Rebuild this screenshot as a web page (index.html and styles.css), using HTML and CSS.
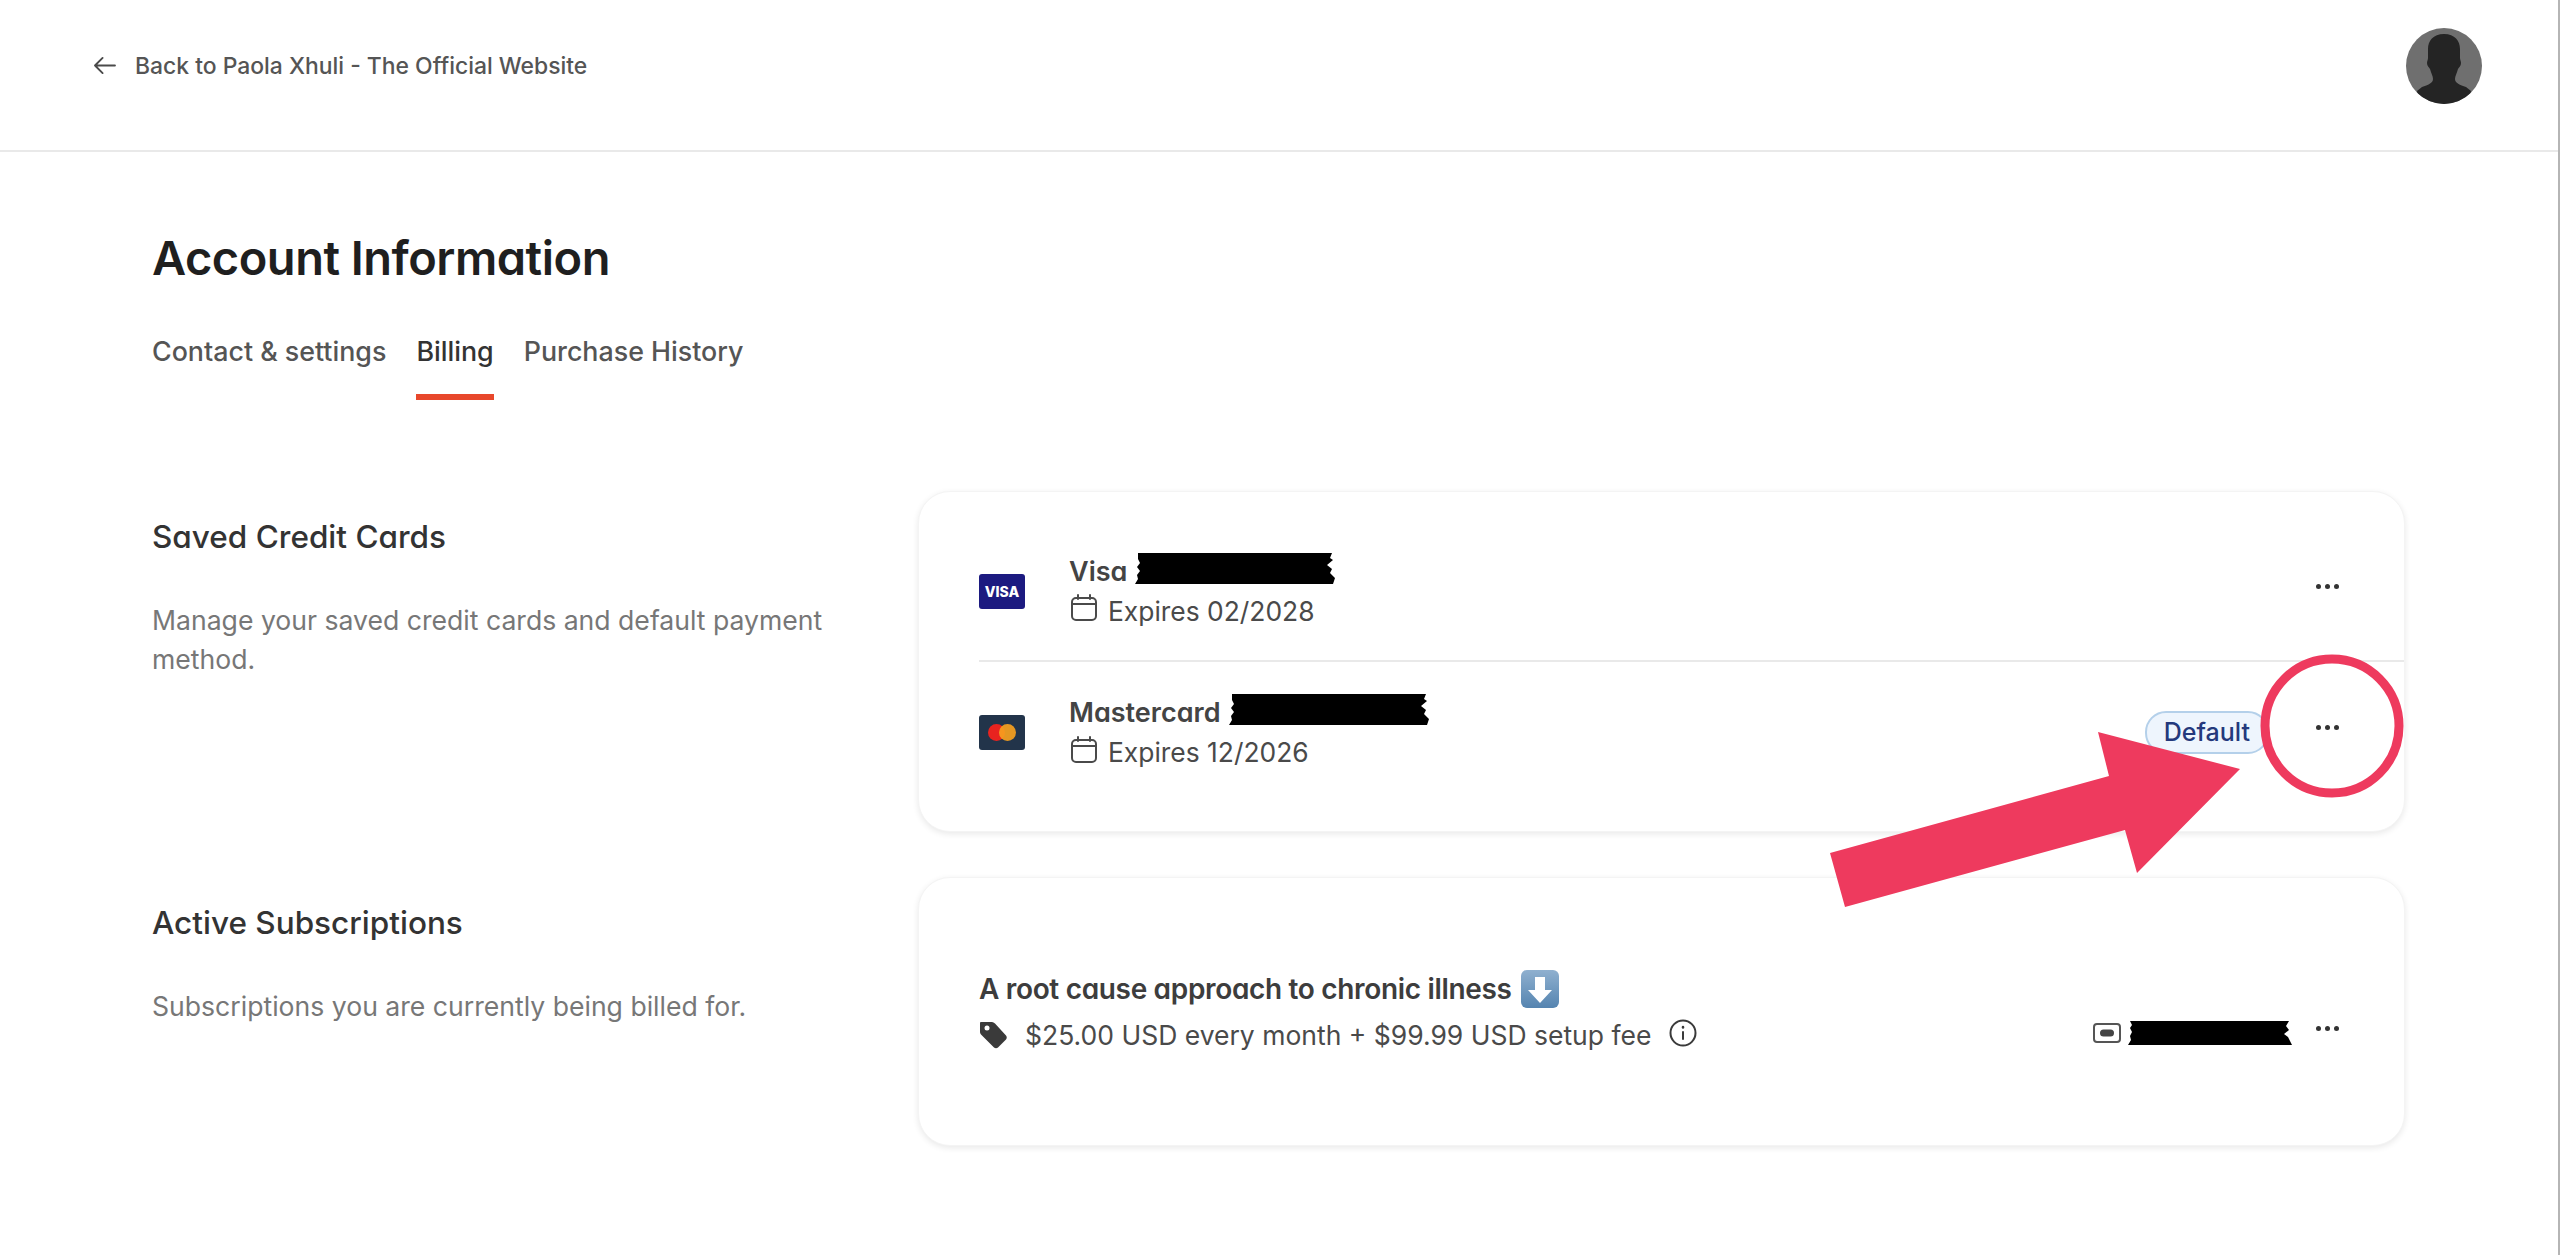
FILE: index.html
```html
<!DOCTYPE html>
<html lang="en">
<head>
  <meta charset="UTF-8" />
  <title>Account Information</title>
  <link rel="stylesheet" href="styles.css">
</head>
<body>
  <div class="page">

    <!-- === Top bar === -->
    <header class="topbar">
      <a class="back" href="#">
        <svg class="back-arrow" viewBox="0 0 24 20" fill="none" stroke="#4a4a4a" stroke-width="2" stroke-linecap="round" stroke-linejoin="round"><path d="M23 10H2M10 2l-8 8 8 8"/></svg>
        Back to Paola Xhuli - The Official Website
      </a>
      <svg class="avatar" viewBox="0 0 76 76">
        <defs><clipPath id="avatar-clip"><circle cx="38" cy="38" r="38"/></clipPath></defs>
        <circle cx="38" cy="38" r="38" fill="#6f6f6f"/>
        <path clip-path="url(#avatar-clip)" fill="#242424" d="M38 6c-11 0-16 7-16 15v9c0 2-1 3-1 5 0 3 2 4 3 6 1 4 3 7 3 10 0 4-5 6-11 8L11 63l3 13h48l3-13-5-4c-6-2-11-4-11-8 0-3 2-6 3-10 1-2 3-3 3-6 0-2-1-3-1-5v-9c0-8-5-15-16-15z"/>
      </svg>
    </header>

    <main class="content">
      <h1 class="title">Account Information</h1>

      <!-- === Tabs === -->
      <nav class="tabs">
        <a class="tab" href="#">Contact &amp; settings</a>
        <a class="tab tab-active" href="#">Billing</a>
        <a class="tab" href="#">Purchase History</a>
      </nav>

      <!-- === Saved cards === -->
      <section class="section section-cards">
        <div class="section-info">
          <h2>Saved Credit Cards</h2>
          <p>Manage your saved credit cards and default payment method.</p>
        </div>
        <div class="panel panel-cards">
          <div class="card-row">
            <svg class="brand" viewBox="0 0 46 35">
              <rect width="46" height="35" rx="3" fill="#1c1a80"/>
              <text x="23" y="22.500" text-anchor="middle" class="brand-text">VISA</text>
            </svg>
            <div class="card-text">
              <div class="card-name">Visa
                <svg class="redact redact-card" viewBox="0 0 200 31" preserveAspectRatio="none"><path d="M3 0H197L195 5 198 7 192 12 197 16 195 20 200 25 198 31H0L3 26 2 22 5 18 2 14 5 10 3 6z"/></svg>
              </div>
              <div class="card-exp">
                <svg class="cal" viewBox="0 0 26 27" fill="none" stroke="#4a4a4a" stroke-width="2" stroke-linecap="round"><rect x="1" y="4" width="24" height="22" rx="4"/><path d="M1 10h24M7 1v4M19 1v4"/></svg>
                Expires 02/2028
              </div>
            </div>
            <div class="dots"><i></i><i></i><i></i></div>
          </div>
          <div class="card-row card-row-last">
            <svg class="brand" viewBox="0 0 46 35">
              <rect width="46" height="35" rx="3" fill="#22344a"/>
              <circle cx="17.500" cy="17.500" r="8.500" fill="#e8231f"/>
              <circle cx="28.500" cy="17.500" r="8.500" fill="#f6a01e" opacity="0.92"/>
            </svg>
            <div class="card-text">
              <div class="card-name">Mastercard
                <svg class="redact redact-card" viewBox="0 0 200 31" preserveAspectRatio="none"><path d="M3 0H197L195 5 198 7 192 12 197 16 195 20 200 25 198 31H0L3 26 2 22 5 18 2 14 5 10 3 6z"/></svg>
              </div>
              <div class="card-exp">
                <svg class="cal" viewBox="0 0 26 27" fill="none" stroke="#4a4a4a" stroke-width="2" stroke-linecap="round"><rect x="1" y="4" width="24" height="22" rx="4"/><path d="M1 10h24M7 1v4M19 1v4"/></svg>
                Expires 12/2026
              </div>
            </div>
            <span class="badge">Default</span>
            <div class="dots"><i></i><i></i><i></i></div>
          </div>
        </div>
      </section>

      <!-- === Subscriptions === -->
      <section class="section">
        <div class="section-info">
          <h2>Active Subscriptions</h2>
          <p>Subscriptions you are currently being billed for.</p>
        </div>
        <div class="panel panel-subs">
          <div class="sub-text">
            <div class="sub-name">A root cause approach to chronic illness
              <svg class="emoji" viewBox="0 0 38 38">
                <defs><linearGradient id="emoji-bg" x1="0" y1="0" x2="0" y2="1"><stop offset="0" stop-color="#8fb0cf"/><stop offset="1" stop-color="#5584b0"/></linearGradient></defs>
                <rect width="38" height="38" rx="6" fill="url(#emoji-bg)"/>
                <path fill="#fff" d="M14 7h10v13h7L19 33 7 20h7z"/>
              </svg>
            </div>
            <div class="sub-price">
              <svg class="tag" viewBox="0 0 29 29"><path fill="#3a3a3a" d="M2 2h11c1 0 2 .5 3 1.500l11 12c1 1 1 3 0 4l-8 8c-1 1-3 1-4 0L3 15.500C2 14.500 1 13.500 1 12V3c0-.5.5-1 1-1z"/><circle cx="8" cy="8" r="2.500" fill="#fff"/></svg>
              <span>$25.00 USD every month + $99.99 USD setup fee</span>
              <svg class="info" viewBox="0 0 28 28" fill="none" stroke="#3a3a3a" stroke-width="2" stroke-linecap="round"><circle cx="14" cy="14" r="12.500"/><path d="M14 13v7"/><path d="M14 8v.5" stroke-width="2.500"/></svg>
            </div>
          </div>
          <div class="sub-side">
            <svg class="pay" viewBox="0 0 28 20" fill="none"><rect x="1" y="1" width="26" height="18" rx="3" stroke="#555" stroke-width="2"/><rect x="7" y="6.500" width="14" height="7" rx="3.500" fill="#444"/></svg>
            <svg class="redact redact-sub" viewBox="0 0 164 24" preserveAspectRatio="none"><path d="M2 0H161L158 5 161 9 156 13 160 16 164 24H0L3 19 2 15 4 11 2 7 4 4z"/></svg>
            <div class="dots dots-sub"><i></i><i></i><i></i></div>
          </div>
        </div>
      </section>
    </main>

    <!-- === Screenshot annotation === -->
    <svg class="markup" viewBox="0 0 2560 1255">
      <ellipse cx="2332" cy="726" rx="67" ry="67" fill="none" stroke="#ee3a5e" stroke-width="9"/>
      <polygon fill="#ee3a5e" points="1830,853 1845,907 2125,830 2137,873 2240,769 2098,732 2109,776"/>
    </svg>
  </div>
</body>
</html>
```

FILE: styles.css
```css
body {
  margin: 0;
  background: #fff;
  color: #2b2b2b;
  font-family: 'Inter', 'Liberation Sans', sans-serif;
}

h1, h2, p {
  margin: 0;
}

a {
  text-decoration: none;
}

.page {
  position: relative;
  height: 1255px;
  overflow: hidden;
  border-right: 2px solid #b5b5b5;
  box-sizing: border-box;
}

/* === Top bar === */
.topbar {
  display: flex;
  align-items: center;
  justify-content: space-between;
  height: 131px;
  padding: 0 76px 19px 93px;
  border-bottom: 2px solid #e9e9e9;
}

.back {
  display: flex;
  align-items: center;
  gap: 19px;
  color: #555;
  font-size: 22.900px;
  font-weight: 500;
}

.back-arrow {
  width: 23px;
  height: 19px;
}

.avatar {
  width: 76px;
  height: 76px;
}

/* === Main === */
.content {
  padding: 0 153px 0 152px;
}

.title {
  margin-top: 81px;
  font-size: 47px;
  line-height: 50px;
  font-weight: 600;
  color: #1f1f1f;
  font-feature-settings: "cv11";
  letter-spacing: -0.5px;
}

.tabs {
  display: flex;
  gap: 30px;
  margin-top: 52px;
}

.tab {
  padding-bottom: 27px;
  border-bottom: 6px solid transparent;
  color: #555;
  font-size: 26.800px;
  line-height: 32px;
  font-weight: 500;
}

.tab-active {
  color: #333;
  border-bottom-color: #e8472b;
}

.section {
  display: grid;
  grid-template-columns: 766px 1487px;
  margin-top: 45px;
}

.section-cards {
  margin-top: 91px;
}

.section-info {
  padding-top: 27px;
}

.section-info h2 {
  font-size: 31.500px;
  line-height: 38px;
  font-weight: 500;
  color: #333;
  font-feature-settings: "cv11";
}

.section-info p {
  width: 700px;
  margin-top: 45px;
  font-size: 26.600px;
  line-height: 39px;
  color: #777;
}

.panel {
  background: #fff;
  border: 1px solid #f4f4f4;
  border-radius: 32px;
  box-shadow: 0 2px 6px rgba(0, 0, 0, 0.09);
}

/* === Saved cards === */
.panel-cards {
  height: 341px;
  box-sizing: border-box;
  padding: 30px 0 30px 60px;
}

.card-row {
  display: flex;
  align-items: center;
  height: 138px;
  padding-right: 65px;
  border-bottom: 2px solid #e9e9e9;
}

.card-row-last {
  height: 141px;
  border-bottom: 0;
}

.brand {
  flex: none;
  width: 46px;
  height: 35px;
  margin-right: 44px;
}

.brand-text {
  fill: #fff;
  font-size: 14px;
  font-weight: 800;
}

.card-text {
  flex: 1;
}

.card-name {
  display: flex;
  align-items: flex-start;
  gap: 8px;
  height: 38px;
  font-size: 27px;
  line-height: 38px;
  font-weight: 600;
  color: #444;
  font-feature-settings: "cv11";
}

.redact {
  display: block;
  fill: #000;
}

.redact-card {
  width: 200px;
  height: 31px;
}

.card-exp {
  display: flex;
  align-items: center;
  gap: 11px;
  margin-top: 1px;
  font-size: 26.400px;
  line-height: 38px;
  color: #4a4a4a;
}

.cal {
  width: 26px;
  height: 27px;
  margin: -6px 0 0 2px;
}

.badge {
  margin: 0 47px 0 0;
  padding: 0 17px;
  border: 2px solid #b4d0ea;
  border-radius: 21px;
  background: #eef5fd;
  color: #24397c;
  font-size: 25px;
  line-height: 39px;
  font-weight: 500;
}

.dots {
  display: flex;
  gap: 4px;
  margin-bottom: 10px;
}

.dots i {
  display: block;
  width: 5px;
  height: 5px;
  border-radius: 50%;
  background: #333;
}

/* === Subscriptions === */
.panel-subs {
  display: flex;
  align-items: center;
  justify-content: space-between;
  height: 269px;
  box-sizing: border-box;
  padding: 0 65px 2px 60px;
}

.sub-name {
  display: flex;
  align-items: center;
  gap: 9px;
  height: 40px;
  font-size: 28px;
  font-weight: 600;
  color: #3d3d3d;
  font-feature-settings: "cv11";
  letter-spacing: -0.33px;
}

.emoji {
  width: 38px;
  height: 38px;
}

.sub-price {
  display: flex;
  align-items: center;
  margin-top: 8px;
  font-size: 26.500px;
  line-height: 36px;
  color: #4a4a4a;
}

.tag {
  width: 29px;
  height: 29px;
  margin-right: 17px;
}

.info {
  width: 28px;
  height: 28px;
  margin: -4px 0 0 18px;
}

.sub-side {
  display: flex;
  align-items: center;
  padding-top: 44px;
}

.pay {
  width: 28px;
  height: 20px;
}

.redact-sub {
  width: 164px;
  height: 24px;
  margin-left: 7px;
}

.dots-sub {
  margin: 0 0 8px 24px;
}

/* === Annotation over the page === */
.markup {
  position: absolute;
  top: 0;
  left: 0;
  width: 2560px;
  height: 1255px;
  pointer-events: none;
}
```
